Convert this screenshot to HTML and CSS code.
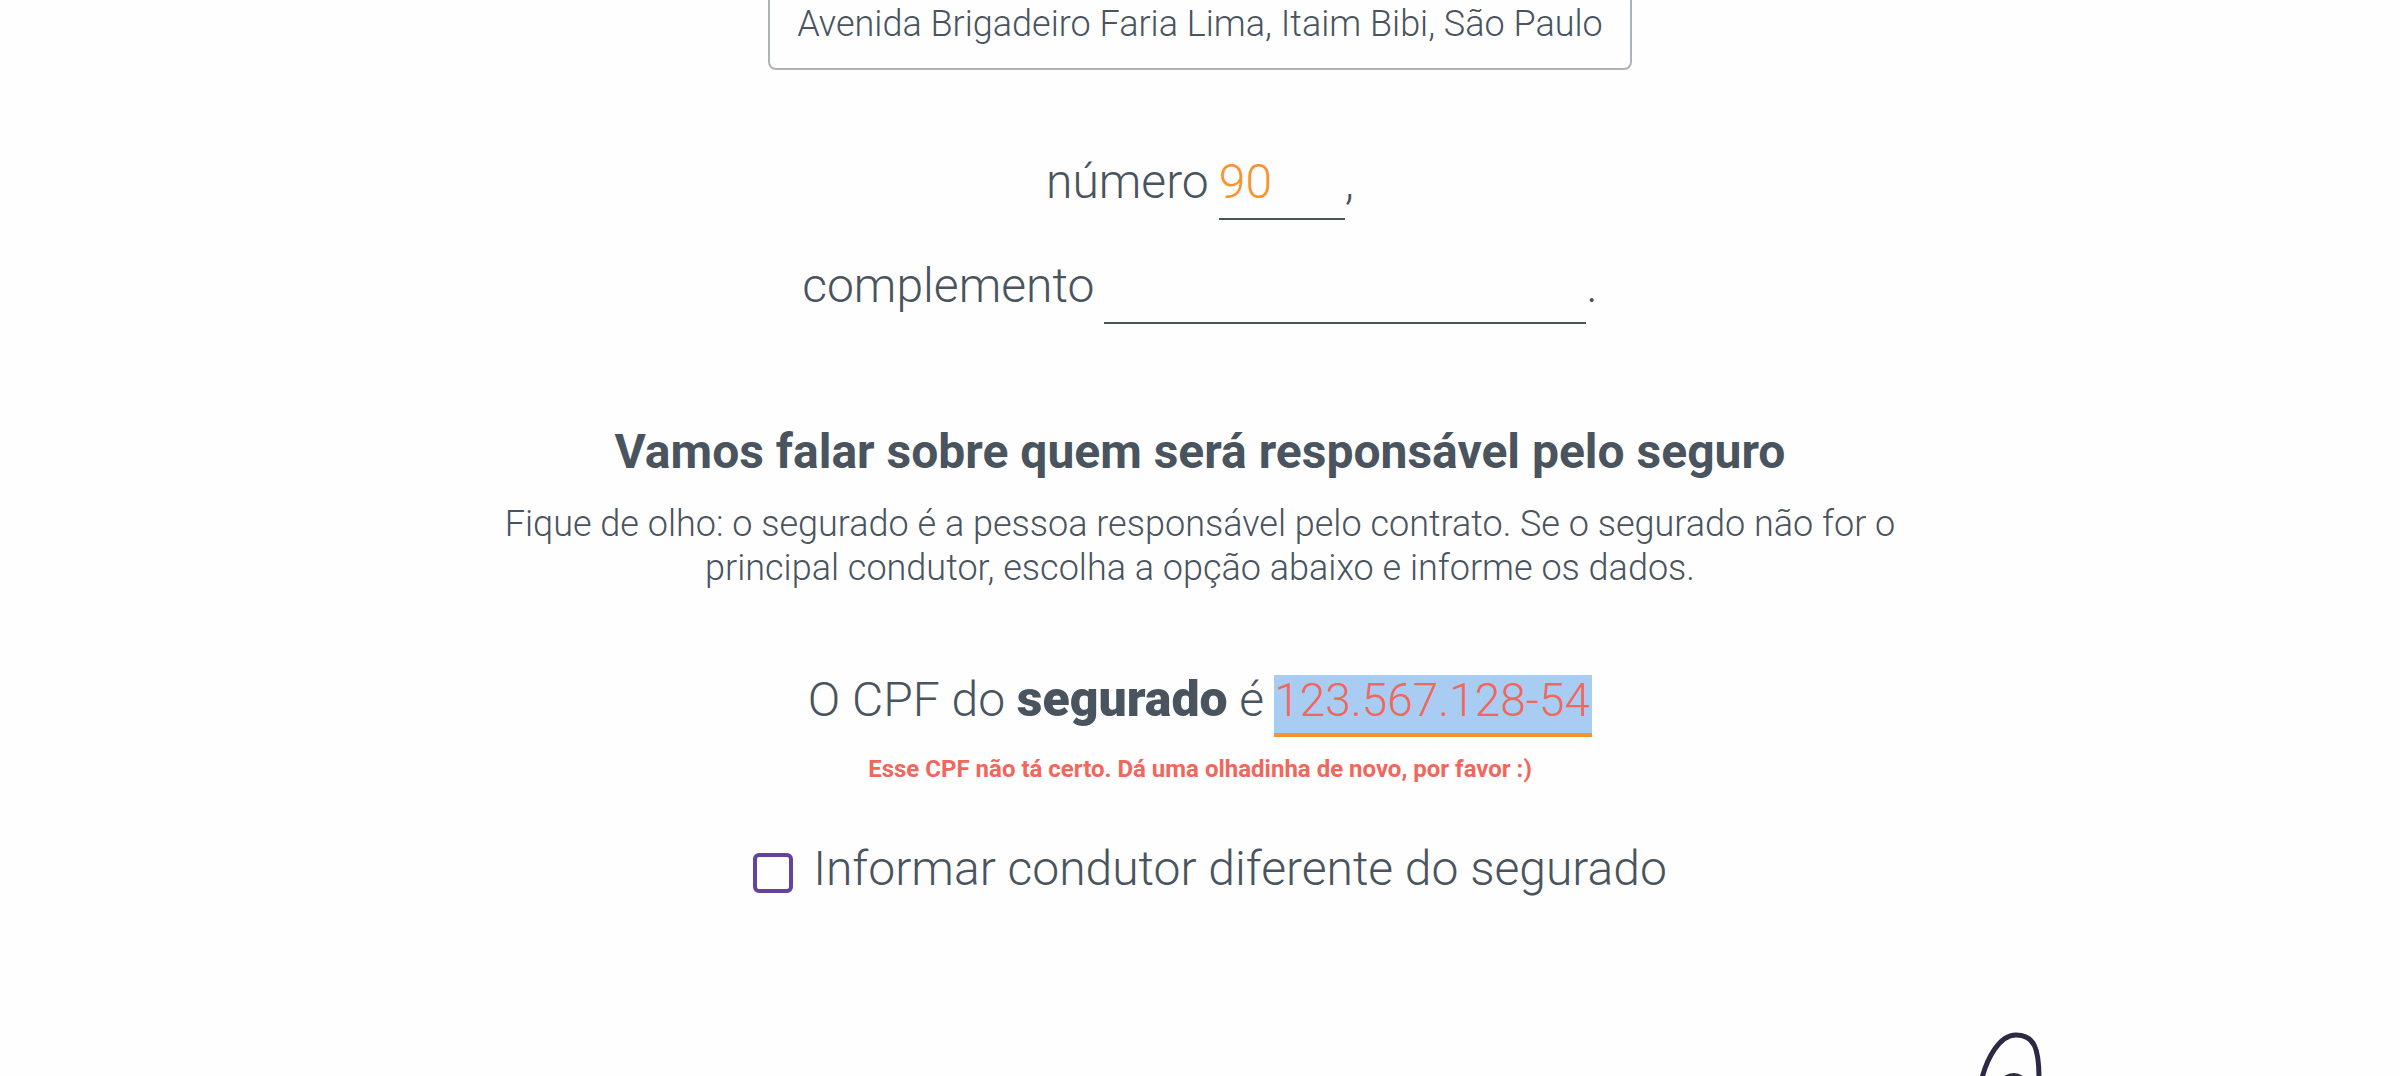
FILE: index.html
```html
<!DOCTYPE html>
<html lang="pt-BR">
<head>
<meta charset="utf-8">
<meta name="viewport" content="width=device-width, initial-scale=1">
<title>Dados do seguro</title>
<link rel="stylesheet" href="styles.css">
</head>
<body>
<form class="page">
  <input class="address" type="text" aria-label="Endereço" value="Avenida Brigadeiro Faria Lima, Itaim Bibi, São Paulo">

  <div class="line line-number">
    <label for="numero">número</label>
    <span class="answer"><input class="field field-number" id="numero" type="text" value="90">,</span>
  </div>

  <div class="line line-complement">
    <label for="complemento">complemento</label>
    <span class="answer"><input class="field field-complement" id="complemento" type="text">.</span>
  </div>

  <section class="owner">
    <h2 class="title">Vamos falar sobre quem será responsável pelo seguro</h2>
    <p class="intro">Fique de olho: o segurado é a pessoa responsável pelo contrato. Se o segurado não for o principal condutor, escolha a opção abaixo e informe os dados.</p>

    <div class="line">
      <label for="cpf">O CPF do <strong>segurado</strong> é</label>
      <input class="field field-cpf" id="cpf" type="text" value="123.567.128-54" aria-describedby="cpf-erro">
    </div>
    <p class="error" id="cpf-erro">Esse CPF não tá certo. Dá uma olhadinha de novo, por favor :)</p>

    <div class="option">
      <input class="check" id="condutor" type="checkbox">
      <label for="condutor">Informar condutor diferente do segurado</label>
    </div>
  </section>

  <footer class="footer">
    <svg class="doodle" width="72" height="44" viewBox="0 0 72 44" fill="none" stroke="#2b2944" stroke-width="5" aria-hidden="true">
      <path d="M6 46C11 27 23 3 40 3C58 3 63 16 63 46"/>
      <path d="M27 48Q38 39 48 48"/>
    </svg>
  </footer>
</form>
</body>
</html>
```
FILE: styles.css
```css
* {
  box-sizing: border-box;
}

body {
  margin: 0;
  background: #fefefe;
  color: #49545e;
  font: 300 48px/56px Roboto, "Noto Sans", sans-serif;
}

input {
  margin: 0;
  padding: 0;
  border: 0;
  border-radius: 0;
  outline: 0;
  background: transparent;
  color: inherit;
  font: inherit;
}

.page {
  display: flex;
  flex-direction: column;
  align-items: center;
  min-height: 100vh;
}

.address {
  width: 864px;
  max-width: 100%;
  height: 70px;
  padding: 2px 18px 22px;
  border: 2px solid #aeb3b8;
  border-top: 0;
  border-radius: 0 0 8px 8px;
  font-size: 36px;
  line-height: 44px;
  text-align: center;
}

.line {
  display: flex;
  align-items: baseline;
  justify-content: center;
  gap: 10px;
  line-height: 50px;
}

.line-number {
  margin-top: 86px;
}

.line-complement {
  margin-top: 40px;
}

.answer {
  display: flex;
  align-items: baseline;
}

.field {
  height: 64px;
  padding-bottom: 12px;
  border-bottom: 2px solid #49545e;
  color: #f7942e;
  line-height: 50px;
}

.field-number {
  width: 126px;
}

.field-complement {
  width: 482px;
}

.field-cpf {
  width: 318px;
  height: 62px;
  padding-bottom: 8px;
  border-bottom: 4px solid #f7942e;
  background: #a9ccf3;
  color: #f1675c;
  font-size: 46px;
}

.owner {
  display: flex;
  flex-direction: column;
  align-items: center;
  margin-top: 100px;
  text-align: center;
}

.title {
  margin: 0 0 22px;
  font-size: 48px;
  font-weight: 700;
}

.intro {
  max-width: 1440px;
  margin: 0 0 84px;
  font-size: 36px;
  line-height: 44px;
}

strong {
  font-size: 50px;
  font-weight: 900;
}

.error {
  margin: 16px 0 0;
  color: #f1675c;
  font-size: 24px;
  font-weight: 700;
  line-height: 32px;
}

.option {
  display: flex;
  align-items: flex-end;
  gap: 20px;
  margin-top: 56px;
  padding-left: 20px;
}

.check {
  appearance: none;
  width: 40px;
  height: 40px;
  margin-bottom: 4px;
  border: 4px solid #65429b;
  border-radius: 6px;
}

.footer {
  display: flex;
  justify-content: flex-end;
  width: 100%;
  margin-top: auto;
  padding-right: 14.65%;
}

.doodle {
  display: block;
}
```
